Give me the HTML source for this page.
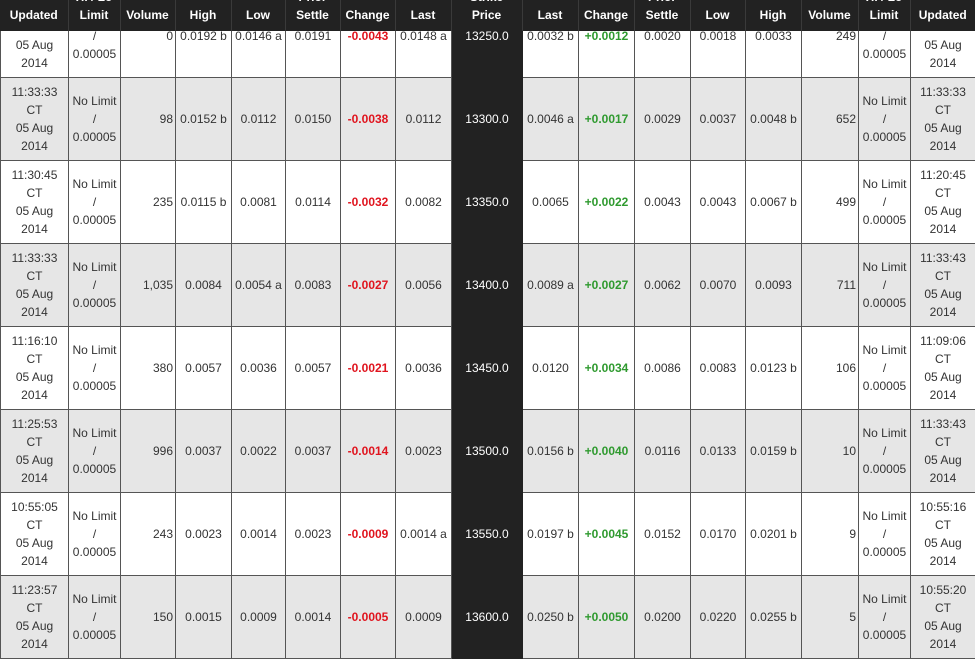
<!DOCTYPE html>
<html><head><meta charset="utf-8"><style>
html,body{margin:0;padding:0;width:975px;height:608px;overflow:hidden;background:#fff;font-family:"Liberation Sans",Arial,sans-serif;font-size:12px;color:#333}
table{border-collapse:collapse;table-layout:fixed;position:absolute;left:0;width:975px}
#b{top:-6px}
#b td{height:82px;border:1px solid #555;padding:0 2px;text-align:center;vertical-align:middle;line-height:18px;overflow:hidden;white-space:nowrap}
#b td.w{white-space:normal}
#b tr.g td{background:#e6e6e6}
#b td.r{text-align:right}
#b tr td.s{background:#222;color:#fff;border-color:#222}
.n{color:#e0141e;font-weight:bold}.p{color:#2f9a2f;font-weight:bold}
#h{top:0;background:#222}
#h td{height:31px;padding:0;color:#fff;font-weight:bold;text-align:center;border-left:1px solid #3a3a3a;overflow:hidden;white-space:nowrap}
#h td:first-child{border-left:none}
.hc{position:relative;height:31px;overflow:hidden}
.hc span{position:absolute;left:0;right:0;bottom:7px;line-height:18px}
</style></head><body>
<table id="b"><colgroup><col style="width:68px"><col style="width:52px"><col style="width:55px"><col style="width:56px"><col style="width:54px"><col style="width:55px"><col style="width:55px"><col style="width:56px"><col style="width:71px"><col style="width:56px"><col style="width:56px"><col style="width:56px"><col style="width:55px"><col style="width:56px"><col style="width:57px"><col style="width:52px"><col style="width:65px"></colgroup>
<tr><td class="w">11:33:33<br>CT<br>05 Aug<br>2014</td><td class="w">No Limit<br>/<br>0.00005</td><td class="r">0</td><td>0.0192 b</td><td>0.0146 a</td><td>0.0191</td><td class="n">-0.0043</td><td>0.0148 a</td><td class="s">13250.0</td><td>0.0032 b</td><td class="p">+0.0012</td><td>0.0020</td><td>0.0018</td><td>0.0033</td><td class="r">249</td><td class="w">No Limit<br>/<br>0.00005</td><td class="w">11:33:33<br>CT<br>05 Aug<br>2014</td></tr>
<tr class="g"><td class="w">11:33:33<br>CT<br>05 Aug<br>2014</td><td class="w">No Limit<br>/<br>0.00005</td><td class="r">98</td><td>0.0152 b</td><td>0.0112</td><td>0.0150</td><td class="n">-0.0038</td><td>0.0112</td><td class="s">13300.0</td><td>0.0046 a</td><td class="p">+0.0017</td><td>0.0029</td><td>0.0037</td><td>0.0048 b</td><td class="r">652</td><td class="w">No Limit<br>/<br>0.00005</td><td class="w">11:33:33<br>CT<br>05 Aug<br>2014</td></tr>
<tr><td class="w">11:30:45<br>CT<br>05 Aug<br>2014</td><td class="w">No Limit<br>/<br>0.00005</td><td class="r">235</td><td>0.0115 b</td><td>0.0081</td><td>0.0114</td><td class="n">-0.0032</td><td>0.0082</td><td class="s">13350.0</td><td>0.0065</td><td class="p">+0.0022</td><td>0.0043</td><td>0.0043</td><td>0.0067 b</td><td class="r">499</td><td class="w">No Limit<br>/<br>0.00005</td><td class="w">11:20:45<br>CT<br>05 Aug<br>2014</td></tr>
<tr class="g"><td class="w">11:33:33<br>CT<br>05 Aug<br>2014</td><td class="w">No Limit<br>/<br>0.00005</td><td class="r">1,035</td><td>0.0084</td><td>0.0054 a</td><td>0.0083</td><td class="n">-0.0027</td><td>0.0056</td><td class="s">13400.0</td><td>0.0089 a</td><td class="p">+0.0027</td><td>0.0062</td><td>0.0070</td><td>0.0093</td><td class="r">711</td><td class="w">No Limit<br>/<br>0.00005</td><td class="w">11:33:43<br>CT<br>05 Aug<br>2014</td></tr>
<tr><td class="w">11:16:10<br>CT<br>05 Aug<br>2014</td><td class="w">No Limit<br>/<br>0.00005</td><td class="r">380</td><td>0.0057</td><td>0.0036</td><td>0.0057</td><td class="n">-0.0021</td><td>0.0036</td><td class="s">13450.0</td><td>0.0120</td><td class="p">+0.0034</td><td>0.0086</td><td>0.0083</td><td>0.0123 b</td><td class="r">106</td><td class="w">No Limit<br>/<br>0.00005</td><td class="w">11:09:06<br>CT<br>05 Aug<br>2014</td></tr>
<tr class="g"><td class="w">11:25:53<br>CT<br>05 Aug<br>2014</td><td class="w">No Limit<br>/<br>0.00005</td><td class="r">996</td><td>0.0037</td><td>0.0022</td><td>0.0037</td><td class="n">-0.0014</td><td>0.0023</td><td class="s">13500.0</td><td>0.0156 b</td><td class="p">+0.0040</td><td>0.0116</td><td>0.0133</td><td>0.0159 b</td><td class="r">10</td><td class="w">No Limit<br>/<br>0.00005</td><td class="w">11:33:43<br>CT<br>05 Aug<br>2014</td></tr>
<tr><td class="w">10:55:05<br>CT<br>05 Aug<br>2014</td><td class="w">No Limit<br>/<br>0.00005</td><td class="r">243</td><td>0.0023</td><td>0.0014</td><td>0.0023</td><td class="n">-0.0009</td><td>0.0014 a</td><td class="s">13550.0</td><td>0.0197 b</td><td class="p">+0.0045</td><td>0.0152</td><td>0.0170</td><td>0.0201 b</td><td class="r">9</td><td class="w">No Limit<br>/<br>0.00005</td><td class="w">10:55:16<br>CT<br>05 Aug<br>2014</td></tr>
<tr class="g"><td class="w">11:23:57<br>CT<br>05 Aug<br>2014</td><td class="w">No Limit<br>/<br>0.00005</td><td class="r">150</td><td>0.0015</td><td>0.0009</td><td>0.0014</td><td class="n">-0.0005</td><td>0.0009</td><td class="s">13600.0</td><td>0.0250 b</td><td class="p">+0.0050</td><td>0.0200</td><td>0.0220</td><td>0.0255 b</td><td class="r">5</td><td class="w">No Limit<br>/<br>0.00005</td><td class="w">10:55:20<br>CT<br>05 Aug<br>2014</td></tr>
</table>
<table id="h"><colgroup><col style="width:68px"><col style="width:52px"><col style="width:55px"><col style="width:56px"><col style="width:54px"><col style="width:55px"><col style="width:55px"><col style="width:56px"><col style="width:71px"><col style="width:56px"><col style="width:56px"><col style="width:56px"><col style="width:55px"><col style="width:56px"><col style="width:57px"><col style="width:52px"><col style="width:65px"></colgroup>
<tr><td><div class="hc"><span>Updated</span></div></td><td><div class="hc"><span>Hi / Lo<br>Limit</span></div></td><td><div class="hc"><span>Volume</span></div></td><td><div class="hc"><span>High</span></div></td><td><div class="hc"><span>Low</span></div></td><td><div class="hc"><span>Prior<br>Settle</span></div></td><td><div class="hc"><span>Change</span></div></td><td><div class="hc"><span>Last</span></div></td><td><div class="hc"><span>Strike<br>Price</span></div></td><td><div class="hc"><span>Last</span></div></td><td><div class="hc"><span>Change</span></div></td><td><div class="hc"><span>Prior<br>Settle</span></div></td><td><div class="hc"><span>Low</span></div></td><td><div class="hc"><span>High</span></div></td><td><div class="hc"><span>Volume</span></div></td><td><div class="hc"><span>Hi / Lo<br>Limit</span></div></td><td><div class="hc"><span>Updated</span></div></td></tr>
</table>
</body></html>
